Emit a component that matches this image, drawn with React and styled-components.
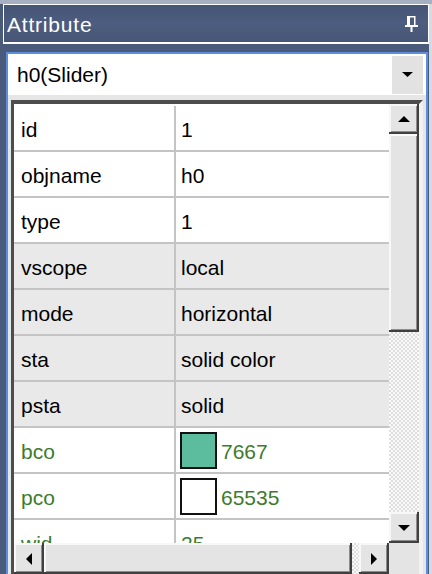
import React from 'react'
import styled, { createGlobalStyle } from 'styled-components'

const GlobalStyle = createGlobalStyle`
  html, body {
    margin: 0;
    padding: 0;
  }
  body {
    background: #d6dae3;
    font-family: "Liberation Sans", Arial, sans-serif;
    overflow: hidden;
  }
`

const rows = [
  { name: 'id', value: '1' },
  { name: 'objname', value: 'h0' },
  { name: 'type', value: '1' },
  { name: 'vscope', value: 'local', shade: true },
  { name: 'mode', value: 'horizontal', shade: true },
  { name: 'sta', value: 'solid color', shade: true },
  { name: 'psta', value: 'solid', shade: true },
  { name: 'bco', value: '7667', green: true, swatch: '#5bbd9e' },
  { name: 'pco', value: '65535', green: true, swatch: '#ffffff' },
  { name: 'wid', value: '25', green: true },
]

const Arrow = ({ dir }) => {
  const shapes = {
    up: { w: 12, h: 6, pts: '6,0 12,6 0,6' },
    down: { w: 12, h: 6, pts: '0,0 12,0 6,6' },
    left: { w: 6, h: 12, pts: '6,0 6,12 0,6' },
    right: { w: 6, h: 12, pts: '0,0 6,6 0,12' },
    combo: { w: 11, h: 5, pts: '0,0 11,0 5.5,5' },
  }
  const s = shapes[dir]
  return (
    <svg width={s.w} height={s.h} viewBox={`0 0 ${s.w} ${s.h}`}>
      <polygon points={s.pts} fill="#000" />
    </svg>
  )
}

const Pin = () => (
  <svg width="13" height="16" viewBox="0 0 13 16">
    <rect x="2.75" y="0.75" width="7" height="9" fill="none" stroke="#fff" strokeWidth="1.5" />
    <rect x="2" y="0" width="3" height="10" fill="#fff" />
    <rect x="0" y="9" width="13" height="2" fill="#fff" />
    <rect x="5.5" y="11" width="2" height="5" fill="#fff" />
  </svg>
)

let App = () => {
  return (
    <Page>
      <GlobalStyle />
      <TopStrip />
      <Window>
        <TitleBar>
          <TitleText>Attribute</TitleText>
          <Pin />
        </TitleBar>
        <Panel>
          <Combo>
            <span>h0(Slider)</span>
            <DropBtn>
              <Arrow dir="combo" />
            </DropBtn>
          </Combo>
          <Frame>
            <Body>
              {rows.map((r) => (
                <Row key={r.name} shade={r.shade}>
                  <LabelCell green={r.green}>{r.name}</LabelCell>
                  <ValueCell green={r.green}>
                    {r.swatch && <Swatch color={r.swatch} />}
                    {r.value}
                  </ValueCell>
                </Row>
              ))}
            </Body>
            <VScroll>
              <ScrollBtn h="30px">
                <Arrow dir="up" />
              </ScrollBtn>
              <Thumb h="198px" />
              <Track />
              <ScrollBtn h="31px">
                <Arrow dir="down" />
              </ScrollBtn>
            </VScroll>
            <HScroll>
              <ScrollBtn w="30px">
                <Arrow dir="left" />
              </ScrollBtn>
              <Thumb w="308px" />
              <Track />
              <ScrollBtn w="30px">
                <Arrow dir="right" />
              </ScrollBtn>
            </HScroll>
            <Corner />
          </Frame>
        </Panel>
      </Window>
    </Page>
  )
}

export default App

const Page = styled.div`
  width: 432px;
  height: 574px;
  overflow: hidden;
  background: #d6dae3;
`

const TopStrip = styled.div`
  height: 4px;
  background: #a7afc3;
`

const Window = styled.div`
  width: 429px;
  height: 570px;
  background: #4a5a7a;
  display: flex;
  flex-direction: column;
`

const TitleBar = styled.div`
  box-sizing: border-box;
  margin-left: 3px;
  height: 40px;
  border: 1px solid #fff;
  border-bottom-width: 2px;
  background: linear-gradient(180deg, #465575 0%, #4d5d7f 50%, #475676 100%);
  display: flex;
  align-items: center;
  justify-content: space-between;
  padding: 0 10px 0 3px;
`

const TitleText = styled.div`
  color: #fff;
  font-size: 21px;
  letter-spacing: 0.8px;
  padding-top: 2px;
`

const Panel = styled.div`
  box-sizing: border-box;
  margin: 8px 0 0 6px;
  width: 422px;
  flex: 1;
  border: 2px solid #5c8edc;
  border-bottom: none;
  background: #e6e6e6;
  display: flex;
  flex-direction: column;
  overflow: hidden;
`

const Combo = styled.div`
  height: 41px;
  flex-shrink: 0;
  background: #fff;
  display: flex;
  align-items: center;
  padding-left: 9px;
  font-size: 21px;
  color: #000;
`

const DropBtn = styled.div`
  margin-left: auto;
  margin-right: 3px;
  width: 31px;
  height: 38px;
  background: #e2e2e2;
  display: flex;
  align-items: center;
  justify-content: center;
`

const Frame = styled.div`
  margin: 5px 3px 0 3px;
  border-top: 4px solid #4d4d4d;
  border-left: 3px solid #4d4d4d;
  border-right: 4px solid #f2f2f2;
  display: grid;
  grid-template-columns: 1fr 30px;
  grid-template-rows: 439px 31px;
`

const Body = styled.div`
  overflow: hidden;
  background: #fff;
  padding-top: 2px;
`

const Row = styled.div`
  box-sizing: border-box;
  display: grid;
  grid-template-columns: 162px 1fr;
  height: 46px;
  border-bottom: 2px solid #c4c4c4;
  background: ${(p) => (p.shade ? '#e9e9e9' : '#fff')};
`

const LabelCell = styled.div`
  display: flex;
  align-items: center;
  padding: 3px 0 0 7px;
  font-size: 21px;
  color: ${(p) => (p.green ? '#3d7b2d' : '#000')};
  border-right: 2px solid #c4c4c4;
`

const ValueCell = styled.div`
  display: flex;
  align-items: center;
  padding: 3px 0 0 5px;
  font-size: 21px;
  color: ${(p) => (p.green ? '#3d7b2d' : '#000')};
`

const Swatch = styled.div`
  box-sizing: border-box;
  width: 37px;
  height: 37px;
  margin: -3px 4px 0 -1px;
  border: 2px solid #111;
  background: ${(p) => p.color};
`

const VScroll = styled.div`
  display: flex;
  flex-direction: column;
`

const HScroll = styled.div`
  display: flex;
`

const ScrollBtn = styled.div`
  box-sizing: border-box;
  flex-shrink: 0;
  width: ${(p) => p.w || 'auto'};
  height: ${(p) => p.h || 'auto'};
  background: #e4e4e4;
  box-shadow: inset -2px -2px 0 #404040, inset 2px 2px 0 #f8f8f8, inset -3px -3px 0 #8c8c8c;
  display: flex;
  align-items: center;
  justify-content: center;
`

const Thumb = styled.div`
  flex-shrink: 0;
  width: ${(p) => p.w || 'auto'};
  height: ${(p) => p.h || 'auto'};
  background: #e4e4e4;
  box-shadow: inset -2px -2px 0 #404040, inset 2px 2px 0 #f8f8f8, inset -3px -3px 0 #8c8c8c;
`

const Track = styled.div`
  flex: 1;
  background-color: #fff;
  background-image: repeating-conic-gradient(#dedede 0 25%, #fafafa 0 50%);
  background-size: 4px 4px;
`

const Corner = styled.div`
  background: #e4e4e4;
`
